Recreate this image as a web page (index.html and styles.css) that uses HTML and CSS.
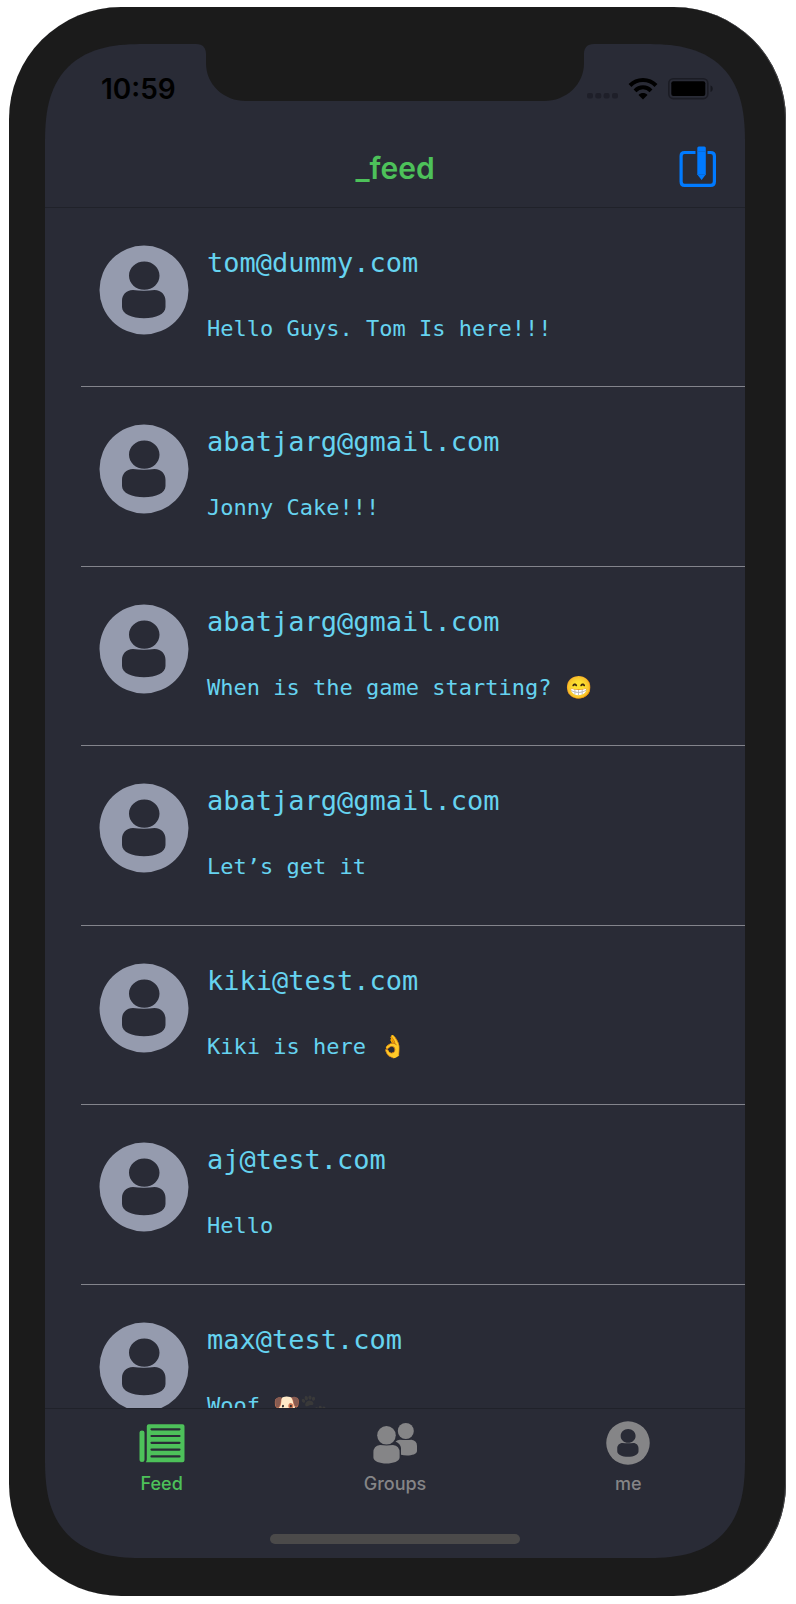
FILE: index.html
```html
<!DOCTYPE html>
<html lang="en">
<head>
<meta charset="utf-8">
<title>_feed</title>
<link rel="stylesheet" href="styles.css">
</head>
<body>
<svg class="symbols" aria-hidden="true">
  <symbol id="person" viewBox="0 0 90 90">
    <path fill-rule="evenodd" fill="currentColor" d="M45 0.500a44.500 44.500 0 1 1 0 89a44.500 44.500 0 0 1 0-89zM45.300 16.500c-8.600 0-15.300 6.400-15.300 14.200s6.700 14 15.300 14s15.200-6.200 15.200-14s-6.600-14.200-15.200-14.200zM34 45c-7 0-11 5-11 11v6c0 7 10 11.300 22 11.300s21.500-4.300 21.500-11.300v-6c0-6-4-11-11-11c-7 1-14.500 1-21.500 0z"/>
  </symbol>
</svg>
<main class="phone">
  <div class="screen">
    <svg class="notch" viewBox="0 0 398 57" width="398" height="57" aria-hidden="true"><path fill="#1b1b1b" d="M0 0h398c-7 0-10 4-10 10v9c0 22-18 38-40 38H50C28 57 10 41 10 19V10C10 4 7 0 0 0z"/></svg>
    <div class="status">
      <time class="clock">10:59</time>
      <div class="signals">
        <svg width="31" height="22" viewBox="0 0 31 22" aria-hidden="true"><g fill="#1e1f29"><rect x="0" y="15" width="6" height="5.500" rx="2"/><rect x="8.300" y="15" width="6" height="5.500" rx="2"/><rect x="16.600" y="15" width="6" height="5.500" rx="2"/><rect x="25" y="15" width="6" height="5.500" rx="2"/></g></svg>
        <svg width="30" height="22" viewBox="0 0 30 22" role="img" aria-label="Wi-Fi"><path fill="none" stroke="#000" stroke-width="4" d="M2 7.500C9 .3 21 .3 28 7.500M7 12.800C11.500 8.200 18.500 8.200 23 12.800"/><path d="M10.500 17c2.500-2.600 6.500-2.600 9 0L15 21.500z"/></svg>
        <svg width="45" height="22" viewBox="0 0 45 22" role="img" aria-label="Battery"><rect x=".8" y=".8" width="39" height="19.800" rx="4.500" fill="none" stroke="#1b1c24" stroke-width="1.600"/><rect x="3.300" y="3.300" width="34" height="14.600" rx="2"/><path fill="#17181f" d="M42.500 7.500c3 1 3 5.500 0 6.500z"/></svg>
      </div>
    </div>
    <header class="navbar">
      <h1>_feed</h1>
      <button class="compose" type="button" aria-label="Compose">
        <svg width="38" height="44" viewBox="0 0 38 44" aria-hidden="true"><path fill="none" stroke="#007aff" stroke-width="3.200" d="M16.500 6.500H5.500Q2.100 6.500 2.100 10V35.500Q2.100 39.400 5.500 39.400H31.500Q35.400 39.400 35.400 35.500V10Q35.400 6.500 31.500 6.500H28.500"/><path fill="#007aff" d="M18.300 2q0-1.500 1.500-1.500h5.500q1.500 0 1.500 1.500V28.500L22.600 34 18.300 28.500z"/><path stroke="#0868d4" stroke-width=".8" d="M18.300 5.500h8.500M18.300 28.500h8.500"/></svg>
      </button>
    </header>
    <ul class="feed">
      <li class="post"><svg class="avatar" aria-hidden="true"><use href="#person"/></svg><div class="body"><h2>tom@dummy.com</h2><p>Hello Guys. Tom Is here!!!</p></div></li>
      <li class="post"><svg class="avatar" aria-hidden="true"><use href="#person"/></svg><div class="body"><h2>abatjarg@gmail.com</h2><p>Jonny Cake!!!</p></div></li>
      <li class="post"><svg class="avatar" aria-hidden="true"><use href="#person"/></svg><div class="body"><h2>abatjarg@gmail.com</h2><p>When is the game starting? 😁</p></div></li>
      <li class="post"><svg class="avatar" aria-hidden="true"><use href="#person"/></svg><div class="body"><h2>abatjarg@gmail.com</h2><p>Let’s get it</p></div></li>
      <li class="post"><svg class="avatar" aria-hidden="true"><use href="#person"/></svg><div class="body"><h2>kiki@test.com</h2><p>Kiki is here 👌</p></div></li>
      <li class="post"><svg class="avatar" aria-hidden="true"><use href="#person"/></svg><div class="body"><h2>aj@test.com</h2><p>Hello</p></div></li>
      <li class="post"><svg class="avatar" aria-hidden="true"><use href="#person"/></svg><div class="body"><h2>max@test.com</h2><p>Woof 🐶<span class="paws">🐾</span></p></div></li>
    </ul>
    <nav class="tabs">
      <button class="tab active" type="button" aria-current="page">
        <svg width="46" height="44" viewBox="0 0 46 44" aria-hidden="true"><path fill="currentColor" d="M.5 11.500q0-2 2.500-2t2.500 2v27q0 2.500-2.500 2.500t-2.500-2.500zM7.800 5.300q0-2 2-2H43.500q2 0 2 2v34q0 2-2 2H6.800q1-1 1-3z"/><path stroke="#292b36" stroke-width="2.200" stroke-linecap="round" d="M12.500 8.300h28M12.500 15h28M12.500 21.800h28M12.500 28.600h28M12.500 35.400h28"/></svg>
        <span>Feed</span>
      </button>
      <button class="tab" type="button">
        <svg width="44" height="44" viewBox="0 0 44 44" aria-hidden="true"><g fill="currentColor"><circle cx="32.800" cy="10" r="8"/><path d="M27 18.700q6 .8 11.500 0 5.500.8 5.500 6.300v5c0 3-5 4.500-10 4.500q-3.500 0-6-.7V27q-.5-4.500-5.500-6.500 2-1.500 4.500-1.800z"/><circle cx="13.500" cy="14.300" r="9.300"/><path d="M7 24q6.500.8 13 0 6.600.8 6.600 7.500v5c0 3.700-6.500 6-13.200 6S.4 40.200.4 36.500v-5Q.4 24.800 7 24z"/></g></svg>
        <span>Groups</span>
      </button>
      <button class="tab" type="button">
        <svg width="44" height="44" aria-hidden="true"><use href="#person"/></svg>
        <span>me</span>
      </button>
    </nav>
    <div class="home"></div>
  </div>
</main>
</body>
</html>
```
FILE: styles.css
```css
* {
  box-sizing: border-box;
  margin: 0;
  padding: 0;
}

body {
  min-height: 100vh;
  padding: 7px 10px 8px 9px;
  background: #fff;
  font-family: Inter, "Liberation Sans", sans-serif;
}

.symbols {
  position: absolute;
  width: 0;
  height: 0;
}

button {
  border: 0;
  background: none;
  color: inherit;
  font: inherit;
  cursor: pointer;
}

svg {
  display: block;
  flex: none;
}

.phone {
  height: calc(100vh - 15px);
  padding: 37px 41px 38px 36px;
  border-radius: 112px;
  background: #1b1b1b;
  box-shadow: inset -1px 0 #47474a;
}

.screen {
  position: relative;
  display: flex;
  flex-direction: column;
  height: 100%;
  border-radius: 80px;
  background: #292b36;
  overflow: hidden;
}

@supports (corner-shape: superellipse(1.4)) {
  .screen {
    border-radius: 100px;
    corner-shape: superellipse(1.4);
  }
}

.notch {
  position: absolute;
  top: 0;
  left: 50%;
  margin-left: -199px;
}

.status {
  display: flex;
  flex: none;
  align-items: center;
  justify-content: space-between;
  height: 88px;
  padding: 1px 32px 0 56px;
}

.clock {
  font-size: 28px;
  font-weight: 600;
  line-height: 32px;
}

.signals {
  display: flex;
  gap: 10px;
}

.navbar {
  display: grid;
  grid-template-columns: 1fr auto 1fr;
  flex: none;
  align-items: center;
  height: 76px;
  padding: 0 28px 4px;
  border-bottom: 1px solid #20222a;
}

.navbar h1 {
  grid-column: 2;
  color: #4dc15a;
  font-size: 30px;
  font-weight: 600;
  line-height: 36px;
}

.compose {
  justify-self: end;
}

.feed {
  flex: 1;
  min-height: 0;
  overflow: hidden;
  padding-left: 36px;
  list-style: none;
}

.post {
  display: flex;
  gap: 18px;
  height: 179px;
  padding: 37px 18px 0;
  border-bottom: 1px solid #83848c;
}

.post:nth-child(even) {
  height: 180px;
}

.avatar {
  width: 90px;
  height: 90px;
  color: #959bae;
}

.body {
  display: grid;
  gap: 34px;
  align-content: start;
  color: #66d3f0;
  font-family: "DejaVu Sans Mono", monospace;
  white-space: nowrap;
}

.body h2 {
  font-size: 27px;
  font-weight: 400;
  line-height: 36px;
}

.body p {
  font-size: 22px;
  line-height: 28px;
}

.paws {
  filter: grayscale(1) brightness(0.6);
}

.tabs {
  display: grid;
  grid-template-columns: repeat(3, 1fr);
  flex: none;
  border-top: 1px solid #20222a;
}

.tab {
  display: flex;
  flex-direction: column;
  align-items: center;
  gap: 7px;
  padding-top: 12px;
  color: #858587;
  font-size: 18px;
  font-weight: 500;
  line-height: 24px;
}

.tab.active {
  color: #4dc15a;
}

.home {
  flex: none;
  width: 250px;
  height: 10px;
  margin: 38px auto 14px;
  border-radius: 5px;
  background: #4b4a4a;
}
```
